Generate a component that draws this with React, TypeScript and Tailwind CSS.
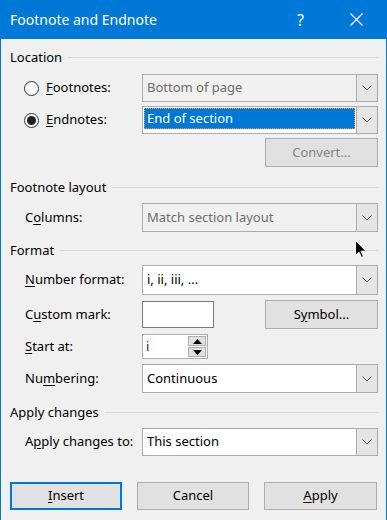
import React from 'react';

const font = { fontFamily: '"Noto Sans", "Open Sans", sans-serif' };

const Chevron = () => (
  <svg width="10" height="6" viewBox="0 0 10 6" className="block">
    <path d="M0.5 0.5 L5 5 L9.5 0.5" fill="none" stroke="#5a5a5a" strokeWidth="1" />
  </svg>
);

const Combo = ({
  value,
  disabled,
  selected,
}: {
  value: string;
  disabled?: boolean;
  selected?: boolean;
}) => (
  <div
    className={`flex h-full w-full border border-[#adadad] ${
      disabled ? 'bg-[#f0f0f0]' : 'bg-white'
    }`}
  >
    {selected ? (
      <div className="flex flex-1 items-start p-[1px]">
        <div className="flex h-[21px] w-full items-center border border-dotted border-[#e8a040] bg-[#0078d7] pl-[2px] text-white">
          {value}
        </div>
      </div>
    ) : (
      <div className="flex flex-1 items-center pl-[4px]">
        <span className={disabled ? 'text-[#6d6d6d]' : 'text-black'}>{value}</span>
      </div>
    )}
    <div className="flex w-[21px] items-center justify-center border-l border-[#adadad] bg-[#e5e5e5]">
      <Chevron />
    </div>
  </div>
);

const Header = ({ text, mt }: { text: string; mt: string }) => (
  <div className={`flex h-[16px] items-center ${mt}`}>
    <span className="pr-[6px] leading-none">{text}</span>
    <div className="h-px flex-1 bg-[#dadada]" />
  </div>
);

const Btn = ({
  children,
  disabled,
  primary,
  className = '',
}: {
  children: React.ReactNode;
  disabled?: boolean;
  primary?: boolean;
  className?: string;
}) => (
  <div
    className={`flex items-center justify-center bg-[#e1e1e1] ${
      primary ? 'border-2 border-[#0078d7]' : 'border border-[#adadad]'
    } ${disabled ? 'text-[#838383]' : 'text-black'} ${className}`}
  >
    {children}
  </div>
);

const Label = ({ children }: { children: React.ReactNode }) => (
  <div className="flex w-[132px] shrink-0 items-center pl-[15px]">{children}</div>
);

const Radio = ({ checked }: { checked?: boolean }) => (
  <div className="mr-[7px] flex h-[15px] w-[15px] items-center justify-center rounded-full border border-[#333] bg-white">
    {checked && <div className="h-[9px] w-[9px] rounded-full bg-[#222]" />}
  </div>
);

const U = ({ children }: { children: React.ReactNode }) => (
  <span className="underline underline-offset-2">{children}</span>
);

export default function App() {
  return (
    <div
      className="relative h-[520px] w-[387px] overflow-hidden border-x border-[#0078d7] bg-[#f0f0f0] text-[13px] text-black"
      style={font}
    >
      <div className="flex h-[39px] items-center bg-[#0078d7] pl-[9px] text-white">
        <span className="flex-1 text-[14px]">Footnote and Endnote</span>
        <span className="mr-[46px] text-[16px]">?</span>
        <svg width="13" height="13" viewBox="0 0 13 13" className="mr-[23px]">
          <path d="M0.5 0.5 L12.5 12.5 M12.5 0.5 L0.5 12.5" stroke="white" strokeWidth="1.3" />
        </svg>
      </div>

      <div className="flex flex-col pl-[9px] pr-[8px]">
        <Header text="Location" mt="mt-[10px]" />

        <div className="mt-[9px] flex h-[28px]">
          <div className="flex w-[132px] shrink-0 items-center pl-[14px]">
            <Radio />
            <span>
              <U>F</U>ootnotes:
            </span>
          </div>
          <Combo value="Bottom of page" disabled />
        </div>

        <div className="mt-[4px] flex h-[28px]">
          <div className="flex w-[132px] shrink-0 items-center pl-[14px]">
            <Radio checked />
            <span>
              <U>E</U>ndnotes:
            </span>
          </div>
          <Combo value="End of section" selected />
        </div>

        <div className="mt-[4px] flex h-[29px] justify-end">
          <Btn disabled className="w-[113px]">
            Convert...
          </Btn>
        </div>

        <Header text="Footnote layout" mt="mt-[12px]" />

        <div className="mt-[8px] flex h-[29px]">
          <Label>
            <span>
              C<U>o</U>lumns:
            </span>
          </Label>
          <Combo value="Match section layout" disabled />
        </div>

        <Header text="Format" mt="mt-[10px]" />

        <div className="mt-[7px] flex h-[30px]">
          <Label>
            <span>
              <U>N</U>umber format:
            </span>
          </Label>
          <Combo value="i, ii, iii, ..." />
        </div>

        <div className="mt-[5px] flex h-[29px] items-center">
          <Label>
            <span>
              C<U>u</U>stom mark:
            </span>
          </Label>
          <div className="h-[27px] w-[72px] border border-[#7a7a7a] bg-white" />
          <div className="flex-1" />
          <Btn className="h-[29px] w-[113px]">
            <span>
              S<U>y</U>mbol...
            </span>
          </Btn>
        </div>

        <div className="mt-[5px] flex h-[25px]">
          <Label>
            <span>
              <U>S</U>tart at:
            </span>
          </Label>
          <div className="flex w-[66px] border border-[#adadad] bg-white">
            <span className="flex-1 pl-[3px] leading-[23px] text-[#5a0a30]">i</span>
            <div className="flex w-[19px] flex-col gap-px py-px pr-px">
              <div className="flex flex-1 items-center justify-center border border-[#adadad] bg-[#e1e1e1]">
                <svg width="9" height="5" viewBox="0 0 9 5">
                  <path d="M4.5 0 L9 5 L0 5 Z" fill="#000" />
                </svg>
              </div>
              <div className="flex flex-1 items-center justify-center border border-[#adadad] bg-[#e1e1e1]">
                <svg width="9" height="5" viewBox="0 0 9 5">
                  <path d="M0 0 L9 0 L4.5 5 Z" fill="#000" />
                </svg>
              </div>
            </div>
          </div>
        </div>

        <div className="mt-[5px] flex h-[29px]">
          <Label>
            <span>
              Nu<U>m</U>bering:
            </span>
          </Label>
          <Combo value="Continuous" />
        </div>

        <Header text="Apply changes" mt="mt-[11px]" />

        <div className="mt-[8px] flex h-[28px]">
          <Label>
            <span>
              A<U>p</U>ply changes to:
            </span>
          </Label>
          <Combo value="This section" />
        </div>

        <div className="mt-[26px] flex h-[28px] gap-[15px]">
          <Btn primary className="w-[112px]">
            <span>
              <U>I</U>nsert
            </span>
          </Btn>
          <Btn className="w-[112px]">Cancel</Btn>
          <Btn className="w-[113px]">
            <span>
              <U>A</U>pply
            </span>
          </Btn>
        </div>
      </div>

      <svg
        width="12"
        height="19"
        viewBox="0 0 12 19"
        className="absolute left-[354px] top-[240px]"
      >
        <path
          d="M0.5 0.5 L0.5 15.5 L4 12 L6.5 17.5 L8.5 16.5 L6 11.2 L11 11.2 Z"
          fill="#000"
          stroke="#fff"
          strokeWidth="1"
        />
      </svg>
    </div>
  );
}
